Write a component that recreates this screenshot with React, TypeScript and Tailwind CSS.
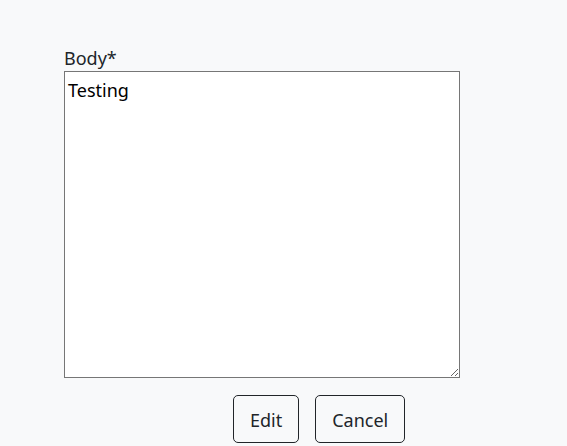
export default function App() {
  return (
    <div
      className="min-h-screen bg-[#f8f9fa] text-[#212529]"
      style={{ fontFamily: '"Noto Sans", "Open Sans", sans-serif' }}
    >
      <div className="pl-[64px] pt-[45px]">
        <label className="block text-[18px] leading-[26px]">Body*</label>
        <textarea
          defaultValue="Testing"
          className="block h-[307px] w-[396px] border border-[#767676] bg-white px-[3px] pt-[5px] pb-[2px] text-[18px] leading-[27px] text-black outline-none"
        />
        <div className="mt-[17px] flex gap-[16px] pl-[169px]">
          <button className="rounded-[5px] border border-[#212529] px-[16px] pt-[11px] pb-[8px] text-[18px] leading-[27px] text-[#212529]">
            Edit
          </button>
          <button className="rounded-[5px] border border-[#212529] px-[16px] pt-[11px] pb-[8px] text-[18px] leading-[27px] text-[#212529]">
            Cancel
          </button>
        </div>
      </div>
    </div>
  );
}
